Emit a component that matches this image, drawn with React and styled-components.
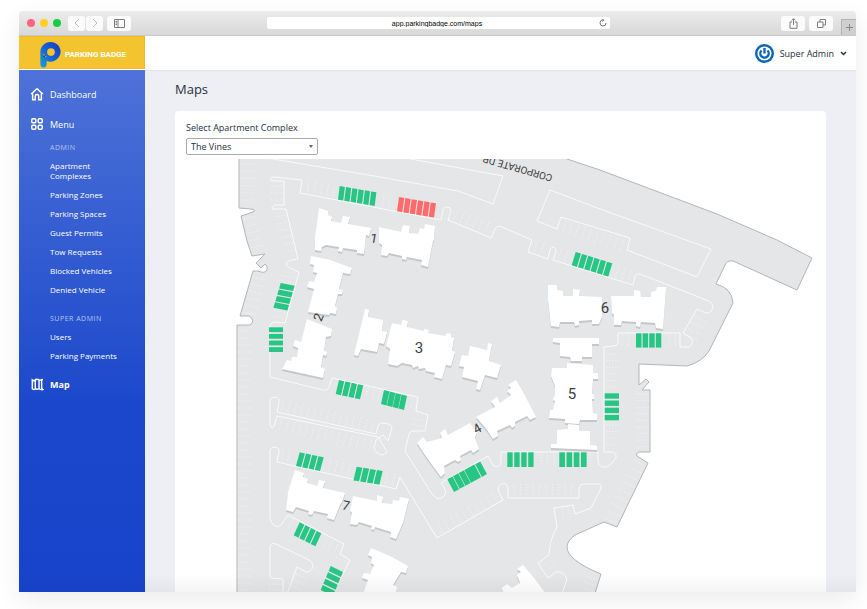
import React from 'react';
import { useState } from 'react';
import styled, { createGlobalStyle } from 'styled-components';

const adminLinks = ["Apartment Complexes", "Parking Zones", "Parking Spaces", "Guest Permits", "Tow Requests", "Blocked Vehicles", "Denied Vehicle"]
const superAdminLinks = ["Users", "Parking Payments"]

const GREEN = "#27c685"
const RED = "#ff6b6b"

// at = first corner, u = along the row, v = depth of one space
const spaces = [
    { at: [339.7, 186], u: [36.7, 6.3], v: [-1.7, 13.7], n: 6 },
    { at: [399, 197], u: [37, 6.3], v: [-2, 14.3], n: 6, color: RED },
    { at: [575.7, 252], u: [36.6, 11.3], v: [-4, 13.3], n: 6 },
    { at: [280.7, 283], u: [-7.3, 24.7], v: [14, 2.7], n: 4 },
    { at: [269, 327.3], u: [0, 24.7], v: [14, 0], n: 4, gap: 1.8 },
    { at: [339, 380], u: [24.3, 5.3], v: [-3.3, 14], n: 4 },
    { at: [384, 390], u: [23, 6], v: [-3, 14], n: 4, gap: 0.4 },
    { at: [636, 333.3], u: [25.3, 0], v: [0, 14.3], n: 4 },
    { at: [604.7, 393.3], u: [0, 27], v: [14.3, 0], n: 4, gap: 1.8 },
    { at: [507.3, 452.3], u: [26.3, 0], v: [0, 14.7], n: 4, gap: 1.6 },
    { at: [559.3, 452.3], u: [27.3, 0], v: [0, 14.7], n: 4, gap: 1.6 },
    { at: [447.3, 479.3], u: [16.6, -9.1], v: [6.7, 12.7], n: 3, gap: 0.6 },
    { at: [464.3, 470], u: [10, -5.5], v: [6.7, 12.7], n: 1 },
    { at: [475.2, 464.2], u: [5, -2.8], v: [6.7, 12.7], n: 1 },
    { at: [299.7, 452.3], u: [24, 5], v: [-3.7, 13.7], n: 4 },
    { at: [356.7, 466.7], u: [26, 4.3], v: [-3.3, 13.7], n: 4 },
    { at: [299.7, 522.3], u: [21.7, 11], v: [-6, 13], n: 4 },
    { at: [330.7, 566], u: [-10, 24], v: [12.3, 6], n: 4, gap: 1.6 },
]

// rows of painted lines between the free spaces
const stalls = [
    { at: [241, 164], step: [0, 7.2], v: [13, 0], n: 6 },
    { at: [244, 219], step: [1.8, 7.2], v: [12, -2.4], n: 5 },
    { at: [253, 277], step: [-2, 7], v: [13, 3], n: 6 },
    { at: [238, 331], step: [0, 7], v: [13, 0], n: 38 },
    { at: [271, 186], step: [0, 7], v: [13, 0], n: 3 },
    { at: [275, 217], step: [2, 7], v: [12, -2.5], n: 6 },
    { at: [281, 275], step: [-2, 5], v: [12, 3], n: 2 },
    { at: [275, 310], step: [-2, 6], v: [12, 3], n: 2 },
    { at: [309, 181], step: [6.5, 1.2], v: [-2, 12], n: 5 },
    { at: [384, 196], step: [6.5, 1.2], v: [-2, 12], n: 2 },
    { at: [458, 210], step: [6.2, 2.5], v: [-5, 12], n: 6 },
    { at: [538, 241], step: [6, 2], v: [-4, 12], n: 2 },
    { at: [562, 249], step: [6, 2], v: [-4, 12], n: 2 },
    { at: [566, 221], step: [6.4, 2.1], v: [-4, 12], n: 10 },
    { at: [619, 266], step: [6.4, 2.1], v: [-4, 12], n: 3 },
    { at: [694, 316], step: [-3, 6], v: [12, 6], n: 4 },
    { at: [622, 335], step: [6.5, 0], v: [0, 12], n: 2 },
    { at: [669, 335], step: [6.5, 0], v: [0, 12], n: 2 },
    { at: [606, 354], step: [0, 6.6], v: [13, 0], n: 6 },
    { at: [606, 425], step: [0, 6.6], v: [13, 0], n: 4 },
    { at: [636, 394], step: [0, 6.6], v: [13, 0], n: 9 },
    { at: [633, 460], step: [-3.6, 7.2], v: [12, 6], n: 9 },
    { at: [541, 454], step: [6.4, 0], v: [0, 12], n: 3 },
    { at: [590, 454], step: [6.4, 0], v: [0, 12], n: 1 },
    { at: [514, 484], step: [6.4, 0], v: [0, 12], n: 10 },
    { at: [438, 523], step: [6, -3.4], v: [5, 10], n: 10 },
    { at: [562, 508], step: [6, -1], v: [2, 12], n: 2 },
    { at: [544, 565], step: [4, 5], v: [8, -5], n: 2 },
    { at: [585, 576], step: [-1, 6], v: [12, 4], n: 3 },
    { at: [284, 400], step: [6.4, 1.5], v: [-3, 12], n: 15 },
    { at: [282, 419], step: [6.4, 1.5], v: [-3, 12], n: 15 },
    { at: [369, 385], step: [6, 1.5], v: [-3, 12], n: 3 },
    { at: [413, 398], step: [4, 1], v: [-3, 12], n: 2 },
    { at: [412, 418], step: [-1, 6], v: [12, 3], n: 2 },
    { at: [284, 449], step: [6, 1.5], v: [-3, 12], n: 2 },
    { at: [331, 460], step: [6.4, 1.5], v: [-3, 12], n: 4 },
    { at: [388, 473], step: [6.4, 1.5], v: [-3, 12], n: 2 },
    { at: [327, 538], step: [5.5, 3], v: [-5, 11], n: 3 },
    { at: [293, 519], step: [5, 3], v: [-5, 10], n: 1 },
    { at: [336, 557], step: [-3, 6], v: [12, 6], n: 1 },
    { at: [269, 584], step: [0, 6], v: [13, 0], n: 2 },
    { at: [296, 574], step: [-2, 6], v: [11, 5], n: 3 },
]

const buildings = [
    "319,208 328,211 328,215 332,217 331,221 341,223 343,216 350,217 348,224 371,228 369,236 366,235 364,254 357,253 357,250 343,248 342,252 338,251 339,247 326,245 322,247 321,251 315,250 315,237",
    "379,227 401,232 403,225 410,226 409,233 418,234 420,228 424,229 425,224 435,226 434,240 433,241 428,267 421,265 422,260 407,257 406,260 402,259 402,256 389,253 387,256 381,255 382,245 379,243",
    "311,256 330,260 352,268 350,274 343,273 339,289 343,290 342,294 338,294 335,306 337,308 336,314 330,313 329,315 308,312 314,289 307,287 309,281 314,282 317,273 313,272 314,265 310,264",
    "307,319 332,329 331,336 326,337 324,351 327,352 326,356 323,355 321,367 325,369 323,378 282,369 287,360 291,361 292,357 297,357 298,348 293,346 295,340 301,342",
    "365,309 369,310 368,317 383,320 382,331 387,332 384,344 379,343 377,352 361,349 358,356 354,355",
    "392,323 401,325 402,320 408,321 407,327 424,331 424,329 429,330 428,333 445,336 447,333 451,334 451,337 454,338 452,351 455,352 451,366 446,365 442,379 434,377 435,373 426,371 425,368 419,369 418,366 413,368 412,365 402,363 397,366 388,364 390,349 386,346",
    "470,346 487,350 488,343 492,344 489,361 501,365 497,378 485,375 480,390 476,389 478,381 462,377 464,367 459,366 462,355 468,356",
    "417,443 423,437 427,442 442,438 440,433 445,429 448,435 470,423 477,432 475,438 479,449 473,453 471,450 460,456 461,460 458,462 455,460 444,466 445,473 441,477 427,458",
    "476,417 495,407 491,401 497,397 500,403 511,395 507,391 511,388 508,385 516,380 523,392 536,417 530,420 527,416 515,422 515,426 512,428 510,425 497,431 498,436 493,439 487,430",
    "553,338 599,338 599,344 592,344 592,357 582,357 582,361 571,361 570,357 560,356 560,343 553,342",
    "567,363 593,365 593,373 598,373 598,379 593,379 592,394 594,394 594,399 592,399 593,413 597,414 597,420 580,420 579,424 565,423 565,419 549,418 550,410 553,410 555,401 553,400 554,397 555,396 555,386 551,376 552,368 567,368",
    "568,424 579,425 579,431 590,431 590,445 597,446 597,450 551,448 551,444 557,444 557,430 568,429",
    "548,285 557,285 557,290 563,291 563,296 573,296 573,289 580,290 579,296 602,297 602,317 599,324 592,324 592,320 579,321 579,325 575,326 574,322 560,322 559,327 551,326 548,300",
    "611,296 634,296 634,290 640,291 641,297 651,297 651,292 656,291 657,287 666,287 665,303 663,329 656,328 655,323 641,322 640,327 636,326 636,322 622,321 621,325 614,325 614,315 612,313",
    "295,470 304,473 303,477 308,479 307,483 317,486 319,480 325,481 323,488 345,493 342,502 340,505 334,520 327,518 328,514 314,511 312,515 308,514 309,511 296,507 293,512 286,510 288,492",
    "353,496 377,501 377,495 383,497 382,503 392,504 393,500 399,501 400,497 409,499 403,523 396,539 390,537 391,532 375,527 374,530 371,529 372,526 359,522 357,525 350,524 352,513 350,511",
    "371,548 390,556 408,566 406,573 401,572 393,585 397,587 396,594 363,594 368,580 362,578 364,573 370,574 374,565 371,563 372,557 368,555",
    "523,565 534,578 546,594 503,594 502,588 507,584 512,588 520,583 517,575 521,572 517,569",
]

const land = `M239,150 V208 L251,209 Q257,210 253,212 L241,216 L247,241 L252,256 L265,254 L256,263 L261,268 L265,264
    Q268,266 267,270 Q265,274 258,271 L253,271 L240,316 L249,316 Q256,320 250,325 H237 V600 H593 L601,574
    Q567,560 567,547 Q567,541 575,535 L604,522 L617,527 L648,463 L637,456 Q635,453 639,452 H650 V390 H642 L649,382 L646,379
    L639,385 V364 L687,366 Q702,362 709,351 L733,303 Q732,288 716,284 L725,265 Q727,260 733,261 L797,290 L812,258
    L777,240 L717,214 L600,170 L540,150 Z`

const curbs = [
    "M255,156 L380,177 L458,191 L493,204 L503,176 L400,157",
    `M302,180 L274,177 Q270,177 270,179 Q270,181 273,181 H284 V205 H275 Q271,206 272,209 L286,209 L298,259 Q287,260 286,264
    Q286,267 299,272 L285,323 L275,322 Q270,323 270,327 V377 L323,390 Q328,391 329,387 L332,378 L418,397 L416,411 L428,415 L425,431
    L414,431 Q410,431 409,434 L405,451 L432,494 Q438,502 444,496 Q448,491 441,483 L488,456 L493,465 Q500,470 501,462 V452 H598 V460
    Q599,467 604,467 Q608,468 611,464 L616,458 Q617,452 611,452 H604 V347 L614,346 Q618,346 618,342 V333 H680 V347 H689
    Q695,343 691,338 L683,333 L697,309 L706,313 Q711,314 713,307 Q713,303 709,301 L640,274 Q636,273 635,276 L633,285 L553,260 L556,252
    Q556,247 553,247 Q551,247 550,250 L548,259 L528,252 L532,240 L502,227 Q497,225 495,229 L491,238 L448,220 L451,211
    Q451,207 447,207 Q444,207 443,210 L441,220 L300,193 Z`,
    "M550,190 L537,221 L557,229 L561,217 L630,238 L627,250 L697,277 L711,249 L600,209 Z",
    `M270,400 Q271,397 275,397 Q280,398 279,402 L277,412 L376,434 L378,426 Q380,422 384,423 Q392,424 392,428 L388,441 L383,435 L376,440
    L374,447 Q376,455 382,455 Q388,454 386,450 L378,437 L277,416 L274,426 Q272,430 270,425 Z`,
    `M270,518 V450 Q271,447 275,447 Q280,448 279,452 L277,462 L396,489 L400,477 L437,538 L503,500 L498,490 Q498,485 504,483
    Q508,484 508,489 V498 H579 V488 Q580,484 584,484 H599 Q602,485 601,488 L591,508 L575,514 L573,505 L554,508 L557,527 Q551,538 550,546
    L549,555 L538,563 L548,578 L556,572 Q564,571 567,579 L562,594`,
    "M270,518 Q271,524 275,526 Q279,527 281,525 L288,515 L344,544 L340,554 L350,560 L333,594",
    "M283,594 V579 L272,578 Q270,578 270,575 V547 Q271,542 276,544 L309,560 Q314,563 313,567 Q310,573 306,572 L297,567 L287,594",
]

const Spaces = ({ at, u, v, n, gap = 1.1, color = GREEN }) => {
    const len = Math.hypot(u[0], u[1])
    const fill = (len - gap * (n - 1)) / n
    return Array.from({ length: n }, (_, i) => {
        const a = (i * (fill + gap)) / len
        const b = a + fill / len
        const x = at[0], y = at[1]
        const points = [
            [x + u[0] * a, y + u[1] * a],
            [x + u[0] * b, y + u[1] * b],
            [x + u[0] * b + v[0], y + u[1] * b + v[1]],
            [x + u[0] * a + v[0], y + u[1] * a + v[1]],
        ]
        return <polygon key={i} points={points.join(" ")} fill={color} />
    })
}

const Stalls = ({ at, step, v, n }) => {
    let d = ""
    for (let i = 0; i < n; i++) {
        d += `M${at[0] + step[0] * i},${at[1] + step[1] * i} l${v[0]},${v[1]} `
    }
    return <path d={d} />
}

const ParkingMap = () => (
    <MapSvg viewBox="186 159 640 433" role="img" aria-label="The Vines">
        <path d={land} fill="#e5e6e8" stroke="#b4b5b7" strokeWidth="1" />
        <g fill="none" stroke="#f7f7f8" strokeWidth="0.7" strokeDasharray="1.4 1.6">
            {stalls.map((s, i) => <Stalls key={i} {...s} />)}
        </g>
        <g fill="none" stroke="#fafafa" strokeWidth="1" strokeLinejoin="round">
            {curbs.map((d, i) => <path key={i} d={d} />)}
        </g>
        <g fill="#c6c7c9" transform="translate(0 2)">
            {buildings.map((p, i) => <polygon key={i} points={p} />)}
        </g>
        <g fill="#fff">
            {buildings.map((p, i) => <polygon key={i} points={p} />)}
        </g>
        {spaces.map((s, i) => <Spaces key={i} {...s} />)}
        <g fill="#3c3d40" fontFamily="Roboto, sans-serif" fontSize="15" textAnchor="middle">
            <text transform="translate(374 238) rotate(10)" y="5" fontSize="13">1</text>
            <text transform="translate(318 317) rotate(-68)" y="5" fontSize="13">2</text>
            <text x="419" y="353">3</text>
            <text transform="translate(477 428) rotate(-30)" y="5" fontSize="13">4</text>
            <text x="572" y="399">5</text>
            <text x="605" y="313">6</text>
            <text transform="translate(346 505) rotate(12)" y="5" fontSize="13">7</text>
            <text transform="translate(553 175) rotate(196)" textAnchor="start" fontSize="10">CORPORATE DR</text>
        </g>
    </MapSvg>
)

const App = () => {
    const [complex, setComplex] = useState("The Vines")
    return (
        <Page>
            <GlobalStyle />
            <Window>
                <BrowserBar>
                    <Lights>
                        <Light $color="#ff6380" />
                        <Light $color="#ffcf21" />
                        <Light $color="#0fd140" />
                    </Lights>
                    <NavButtons>
                        <BarButton $width={17} aria-label="Back">
                            <svg width="8" height="10" viewBox="0 0 8 10"><path d="M6 1 2 5l4 4" /></svg>
                        </BarButton>
                        <BarButton $width={17} aria-label="Forward">
                            <svg width="8" height="10" viewBox="0 0 8 10"><path d="m2 1 4 4-4 4" /></svg>
                        </BarButton>
                    </NavButtons>
                    <BarButton $width={24} $dark aria-label="Sidebar">
                        <svg width="11" height="9" viewBox="0 0 11 9"><path d="M.5.5h10v8H.5zM4 .5v8M1.5 2.5h1.5M1.5 4h1.5M1.5 5.5h1.5" /></svg>
                    </BarButton>
                    <Address>
                        <AddressInput aria-label="Address" defaultValue="app.parkingbadge.com/maps" />
                        <Reload aria-label="Reload">
                            <svg width="8" height="8" viewBox="0 0 8 8"><path d="M4.5 1A3 3 0 1 0 7 4M3.2 0l1.6 1.1L3.5 2.6" /></svg>
                        </Reload>
                    </Address>
                    <Tools>
                        <BarButton $width={24} $dark aria-label="Share">
                            <svg width="9" height="11" viewBox="0 0 9 11"><path d="M3 4H1v6.3h7V4H6M4.5 7V.8M2.7 2.5 4.5.7l1.8 1.8" /></svg>
                        </BarButton>
                        <BarButton $width={24} $dark aria-label="Tabs">
                            <svg width="9" height="9" viewBox="0 0 9 9"><path d="M.5 3H6v5.5H.5zM3 3V.5h5.5V6H6" /></svg>
                        </BarButton>
                    </Tools>
                    <NewTab aria-label="New tab">
                        <svg width="9" height="9" viewBox="0 0 9 9"><path d="M4.5 1v7M1 4.5h7" /></svg>
                    </NewTab>
                </BrowserBar>
                <Body>
                    <Sidebar>
                        <Brand href="#">
                            <svg width="22" height="27" viewBox="0 0 22 28">
                                <defs>
                                    <linearGradient id="p" x1="1" y1="0" x2="0" y2="1">
                                        <stop offset="0" stopColor="#1636c9" />
                                        <stop offset="0.5" stopColor="#1660d6" />
                                        <stop offset="1" stopColor="#17a3d9" />
                                    </linearGradient>
                                </defs>
                                <path fillRule="evenodd" fill="url(#p)" d="M11.5 1C17.5 1 22 5.5 22 11s-4.5 10.5-10.5 10.5c-1.5 0-3-.3-4-.8V24c0 2.5-1.5 3.5-3.500 3.500S1 26 1 24V11.500C1 5.500 5.500 1 11.500 1ZM12 7.500a4 4 0 1 0 0 8 4 4 0 0 0 0-8Z" />
                                <path fill="#12307c" d="M3 13.500 6 15l1 2-3-1z" />
                                <path fill="#f4c430" d="m3 13.500 2.500.7-.5 1.500zM5.500 15.500l1.800.3-.5 1.200z" />
                            </svg>
                            <span>PARKING BADGE</span>
                        </Brand>
                        <Nav>
                            <NavLink href="#">
                                <svg width="14" height="14" viewBox="0 0 24 24"><path d="m2 12 10-9 10 9M4.5 10.5V22H9v-6a3 3 0 0 1 6 0v6h4.5V10.5" /></svg>
                                Dashboard
                            </NavLink>
                            <NavLink href="#">
                                <svg width="14" height="14" viewBox="0 0 24 24"><rect x="3" y="3" width="7" height="7" rx="2" /><rect x="14" y="3" width="7" height="7" rx="2" /><rect x="3" y="14" width="7" height="7" rx="2" /><rect x="14" y="14" width="7" height="7" rx="2" /></svg>
                                Menu
                            </NavLink>
                            <SubNav>
                                <SubTitle>ADMIN</SubTitle>
                                {adminLinks.map(l => <SubLink href="#" key={l}>{l}</SubLink>)}
                            </SubNav>
                            <SubNav>
                                <SubTitle>SUPER ADMIN</SubTitle>
                                {superAdminLinks.map(l => <SubLink href="#" key={l}>{l}</SubLink>)}
                            </SubNav>
                            <NavLink href="#" $active>
                                <svg width="14" height="14" viewBox="0 0 24 24"><path d="M4 5c2 2 3.5 1.5 5 0v15c-1.5 2-3 2-5 0ZM9 5c2-1.5 4-1.5 6.5 0v15c-2.5 1.5-4.5 1.5-6.5 0M15.5 5c2 1 4 0 6-1.5-2 3-2 5-1.5 7v7.5c0 2 1 3 2 3.5-2 .5-4.5 0-6.5-1.500" /></svg>
                                Map
                            </NavLink>
                        </Nav>
                    </Sidebar>
                    <Content>
                        <TopBar>
                            <UserButton>
                                <svg width="19" height="19" viewBox="0 0 19 19">
                                    <circle cx="9.5" cy="9.5" r="9.5" fill="#0d67b5" />
                                    <circle cx="9.5" cy="9.5" r="7" fill="#fff" />
                                    <path d="M6.5 6.5a4.2 4.2 0 1 0 6 0M9.5 4v5.500" fill="none" stroke="#0d67b5" strokeWidth="2.4" />
                                </svg>
                                Super Admin
                                <svg width="7" height="5" viewBox="0 0 7 5"><path d="m1 1 2.5 2.5L6 1" fill="none" stroke="#252f3f" strokeWidth="1.4" /></svg>
                            </UserButton>
                        </TopBar>
                        <Main>
                            <Title>Maps</Title>
                            <Card>
                                <Label htmlFor="complex">Select Apartment Complex</Label>
                                <SelectBox>
                                    <Select id="complex" value={complex} onChange={e => setComplex(e.target.value)}>
                                        <option>The Vines</option>
                                    </Select>
                                </SelectBox>
                                <ParkingMap />
                            </Card>
                        </Main>
                    </Content>
                </Body>
            </Window>
        </Page>
    );
}

const GlobalStyle = createGlobalStyle`
  * {
    box-sizing: border-box;
  }
  body {
    margin: 0;
    background: #fff;
    font-family: "Open Sans", "Noto Sans", sans-serif;
    color: #252f3f;
  }
  button, input, select {
    font-family: inherit;
    color: inherit;
  }
`;

const Page = styled.div`
  padding: 11px 11px 17px 19px;
  overflow: hidden;
`;

const Window = styled.div`
  border-radius: 4px 4px 0 0;
  box-shadow: 0 8px 24px rgba(0, 0, 0, 0.08);
`;

const BrowserBar = styled.div`
  display: flex;
  align-items: center;
  height: 25px;
  padding-left: 8px;
  border-bottom: 1px solid #c9c9c9;
  border-radius: 4px 4px 0 0;
  background: linear-gradient(#ececec, #d8d8d8);
`;

const Lights = styled.div`
  display: flex;
  gap: 5px;
`;

const Light = styled.span`
  width: 8px;
  height: 8px;
  border-radius: 50%;
  background: ${p => p.$color};
`;

const NavButtons = styled.div`
  display: flex;
  gap: 1px;
  margin: 0 4px 0 7px;
`;

const Tools = styled.div`
  display: flex;
  gap: 4px;
  margin-left: 36px;
`;

const BarButton = styled.button`
  display: flex;
  align-items: center;
  justify-content: center;
  width: ${p => p.$width}px;
  height: 15px;
  padding: 0;
  border: none;
  border-radius: 3px;
  background: #fbfbfb;
  svg {
    fill: none;
    stroke: ${p => p.$dark ? "#7d7d7d" : "#bdbdbd"};
  }
`;

const Address = styled.div`
  display: flex;
  flex: 0 1 343px;
  height: 12px;
  margin: 0 auto;
  border-radius: 2px;
  background: #fff;
`;

const AddressInput = styled.input`
  flex: 1;
  min-width: 0;
  padding: 0 0 0 12px;
  border: none;
  background: none;
  text-align: center;
  font-family: "Liberation Sans", sans-serif;
  font-size: 7px;
  color: #000;
`;

const Reload = styled.button`
  display: flex;
  align-items: center;
  padding: 0 3px;
  border: none;
  background: none;
  svg {
    fill: none;
    stroke: #777;
  }
`;

const NewTab = styled.button`
  display: flex;
  align-items: center;
  justify-content: center;
  align-self: flex-end;
  width: 15px;
  height: 16px;
  margin-left: 8px;
  padding: 0;
  border: solid #b3b3b3;
  border-width: 1px 0 0 1px;
  background: #cfcfcf;
  svg {
    stroke: #888;
  }
`;

const Body = styled.div`
  position: relative;
  display: flex;
  &::after {
    content: "";
    position: absolute;
    inset: auto 0 0;
    height: 18px;
    background: linear-gradient(transparent, rgba(0, 0, 0, 0.04));
    pointer-events: none;
  }
`;

const Sidebar = styled.aside`
  display: flex;
  flex-direction: column;
  flex: 0 0 126px;
`;

const Brand = styled.a`
  display: flex;
  align-items: center;
  justify-content: center;
  gap: 4px;
  height: 33px;
  padding-left: 2px;
  border: solid #f0b91d;
  border-width: 1px 1px 1px 0;
  background: #f4c430;
  color: #fff;
  text-decoration: none;
  font-family: Roboto, sans-serif;
  font-size: 8px;
  font-weight: 700;
  svg, span {
    margin-top: 3px;
  }
`;

const Nav = styled.nav`
  flex: 1;
  margin-top: 1px;
  padding: 17px 11px;
  background: linear-gradient(#4e72d8, #1a47cb 66%, #1744cb);
`;

const NavLink = styled.a`
  display: flex;
  align-items: center;
  gap: 6px;
  height: 14px;
  margin-bottom: 16px;
  color: #fff;
  text-decoration: none;
  font-size: 9px;
  font-weight: ${p => p.$active ? 700 : 400};
  svg {
    fill: none;
    stroke: #fff;
    stroke-width: 2.5;
  }
`;

const SubNav = styled.div`
  margin: -4px 0 16px 20px;
  & + & {
    margin-top: 19px;
  }
`;

const SubTitle = styled.h3`
  margin: 0 0 8px;
  font-size: 7px;
  line-height: 10px;
  font-weight: 400;
  letter-spacing: 0.5px;
  color: #b6c5f0;
`;

const SubLink = styled.a`
  display: block;
  max-width: 72px;
  margin-bottom: 9px;
  color: #fff;
  text-decoration: none;
  font-size: 8px;
  line-height: 10px;
`;

const Content = styled.div`
  flex: 1;
  min-width: 0;
  background: #edeff4;
`;

const TopBar = styled.header`
  display: flex;
  justify-content: flex-end;
  height: 35px;
  padding-right: 9px;
  border-bottom: 1px solid #e2e4e8;
  background: #fff;
`;

const UserButton = styled.button`
  display: flex;
  align-items: center;
  gap: 6px;
  padding: 0;
  border: none;
  background: none;
  font-size: 9px;
`;

const Main = styled.main`
  padding: 9px 30px 0;
`;

const Title = styled.h1`
  margin: 0 0 13px;
  font-size: 13px;
  line-height: 18px;
  font-weight: 400;
`;

const Card = styled.section`
  padding: 11px 0 0 11px;
  border-radius: 4px 4px 0 0;
  background: #fff;
`;

const Label = styled.label`
  display: block;
  font-size: 9px;
  line-height: 12px;
`;

const SelectBox = styled.div`
  position: relative;
  width: 132px;
  margin: 4px 0;
  &::after {
    content: "";
    position: absolute;
    top: 7px;
    right: 5px;
    border: solid transparent;
    border-width: 3px 2px 0;
    border-top-color: #666;
  }
`;

const Select = styled.select`
  display: block;
  width: 100%;
  height: 17px;
  padding: 0 4px;
  border: 1px solid #aaa;
  border-radius: 2px;
  appearance: none;
  background: #fff;
  font-size: 9px;
`;

const MapSvg = styled.svg`
  display: block;
  width: 100%;
  height: auto;
`;

export default App;
